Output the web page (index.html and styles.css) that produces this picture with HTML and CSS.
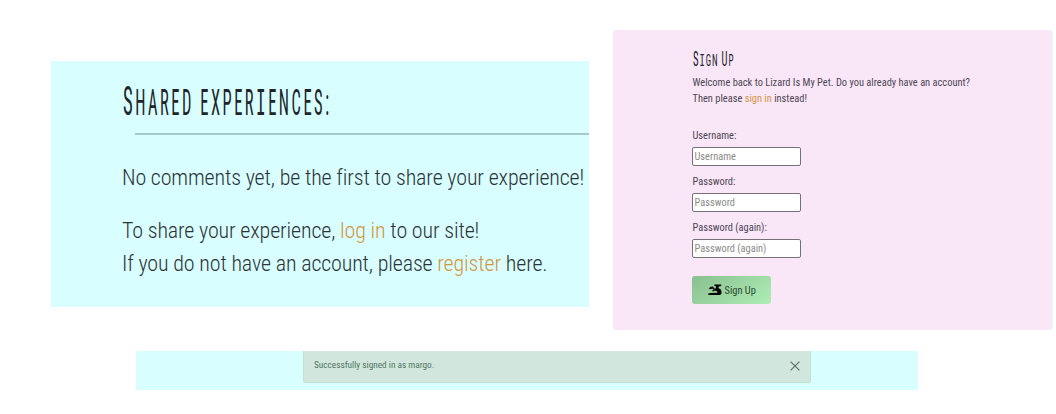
FILE: index.html
```html
<!DOCTYPE html>
<html lang="en">
<head>
<meta charset="utf-8">
<title>Lizard Is My Pet</title>
<link rel="stylesheet" href="styles.css">
</head>
<body>
<main class="page">
  <div class="top">
    <section class="comments">
      <h1 class="title"><span class="line title-text"><span class="cap">S</span>HARED EXPER<span class="slab">I</span>ENCES:</span></h1>
      <hr class="rule">
      <p class="para"><span class="line">No comments yet, be the first to share your experience!</span></p>
      <p class="para"><span class="line">To share your experience, <a class="link">log in</a> to our site!</span><br><span class="line">If you do not have an account, please <a class="link">register</a> here.</span></p>
    </section>
    <section class="signup">
      <h2 class="subtitle"><span class="line subtitle-text"><span class="cap">S</span><span class="slab">I</span>GN <span class="cap">U</span>P</span></h2>
      <p class="intro"><span class="line small">Welcome back to Lizard Is My Pet. Do you already have an account?</span><br><span class="line small">Then please <a class="link">sign in</a> instead!</span></p>
      <form class="form">
        <label class="label"><span class="line small">Username:</span></label>
        <div class="field"><span class="line small">Username</span></div>
        <label class="label"><span class="line small">Password:</span></label>
        <div class="field"><span class="line small">Password</span></div>
        <label class="label"><span class="line small">Password (again):</span></label>
        <div class="field"><span class="line small">Password (again)</span></div>
        <button class="button" type="button">
          <svg class="lizard" viewBox="0 0 14 12"><path d="M.6 4.6 L2.4 3 L4.6 2.6 L6.8 4.6 L5.6 5.4 L4.2 4.6 L2.6 5.2Z M6.4 .6 L13.2 .4 L13.2 1.9 L10.8 2.6 L10.4 4 L12.8 5.4 L13.5 7.4 L13.4 9.8 L12 10.9 L.4 10.9 L.2 9.6 L3 9 L9.2 8.8 L9.6 7.8 L7.2 6.6 L4.8 7.6 L4 6.8 L7.4 4.6 L8.4 2.4 L6.4 2Z"/></svg>
          <span class="line small">Sign Up</span>
        </button>
      </form>
    </section>
  </div>
  <div class="strip">
    <div class="alert">
      <span class="line alert-text">Successfully signed in as margo.</span>
      <svg class="close" viewBox="0 0 10 10"><path d="M.6 .6 L9.4 9.4 M9.4 .6 L.6 9.4"/></svg>
    </div>
  </div>
</main>
</body>
</html>
```
FILE: styles.css
```css
* { box-sizing: border-box; }
body { margin: 0; background: #fff; color: #2c3337; font-family: Roboto, "Liberation Sans", sans-serif; font-stretch: condensed; font-weight: 300; }
h1, h2, p { margin: 0; font-weight: inherit; }
.page { width: 1056px; height: 414px; overflow: hidden; padding-top: 30px; }
.top { display: flex; align-items: flex-start; height: 321px; padding-left: 51px; }
.line { display: inline-block; white-space: nowrap; transform-origin: 0 50%; }
.link { color: #d2963c; }
.comments { width: 538px; height: 246px; margin-top: 31px; padding: 15px 0 0 71px; background: #d9feff; }
.title { height: 57px; padding-left: 1px; font-size: 36px; line-height: 50px; font-weight: 450; color: #212529; }
.title-text { letter-spacing: 5.5px; transform: scaleX(.457); }
.title .cap { font-size: 41px; }
.slab { font-family: "DejaVu Sans Mono", monospace; font-weight: 400; font-size: .97em; }
.rule { height: 2px; margin: 0 0 26px 13px; border: 0; background: #a5c8cb; }
.para { height: 33px; margin-bottom: 20px; font-size: 22px; line-height: 33px; }
.para .line { letter-spacing: -.15px; }
.signup { width: 439px; height: 300px; margin-left: 24px; padding: 17px 0 0 79px; background: #f9e6f7; border-radius: 3px; box-shadow: 1px 0 0 #e2fbfc; color: #4c4753; font-size: 11.5px; }
.subtitle { height: 27px; padding-left: 1px; font-size: 17px; line-height: 24px; font-weight: 450; color: #212529; }
.subtitle-text { letter-spacing: 1.8px; transform: scaleX(.53); }
.subtitle .cap { font-size: 20px; }
.small { transform: translateX(.5px) scaleX(.905); font-weight: 370; }
.intro { height: 53px; line-height: 16px; }
.form { width: 109px; }
.label { display: block; height: 20px; line-height: 16px; }
.field { height: 19px; margin-bottom: 7px; padding-left: 1px; border: 1px solid #767179; border-radius: 2px; background: #fff; color: #8a8a88; line-height: 17px; }
.field + .button { margin-top: 18px; }
.button { display: flex; align-items: center; gap: 2px; width: 79px; height: 28px; padding: 0 0 0 16px; border: 0; border-radius: 3px; background: linear-gradient(145deg, #8abf90, #aeeeb5); color: #2c4a34; font: inherit; font-stretch: condensed; }
.lizard { flex: none; width: 14px; height: 12px; fill: #000; }
.strip { width: 782px; height: 39px; margin-left: 136px; padding-left: 167px; background: #d9feff; }
.alert { display: flex; justify-content: space-between; width: 508px; height: 32px; padding: 0 10px; border: 1px solid #c3dfd0; border-top: 0; border-radius: 0 0 3px 3px; background: #d1e7dd; color: #507563; font-size: 9px; line-height: 29px; font-weight: 400; }
.alert-text { transform: scaleX(1.03); }
.close { width: 10px; height: 10px; margin-top: 10px; fill: none; stroke: #65736c; stroke-width: 1.3; }
```
